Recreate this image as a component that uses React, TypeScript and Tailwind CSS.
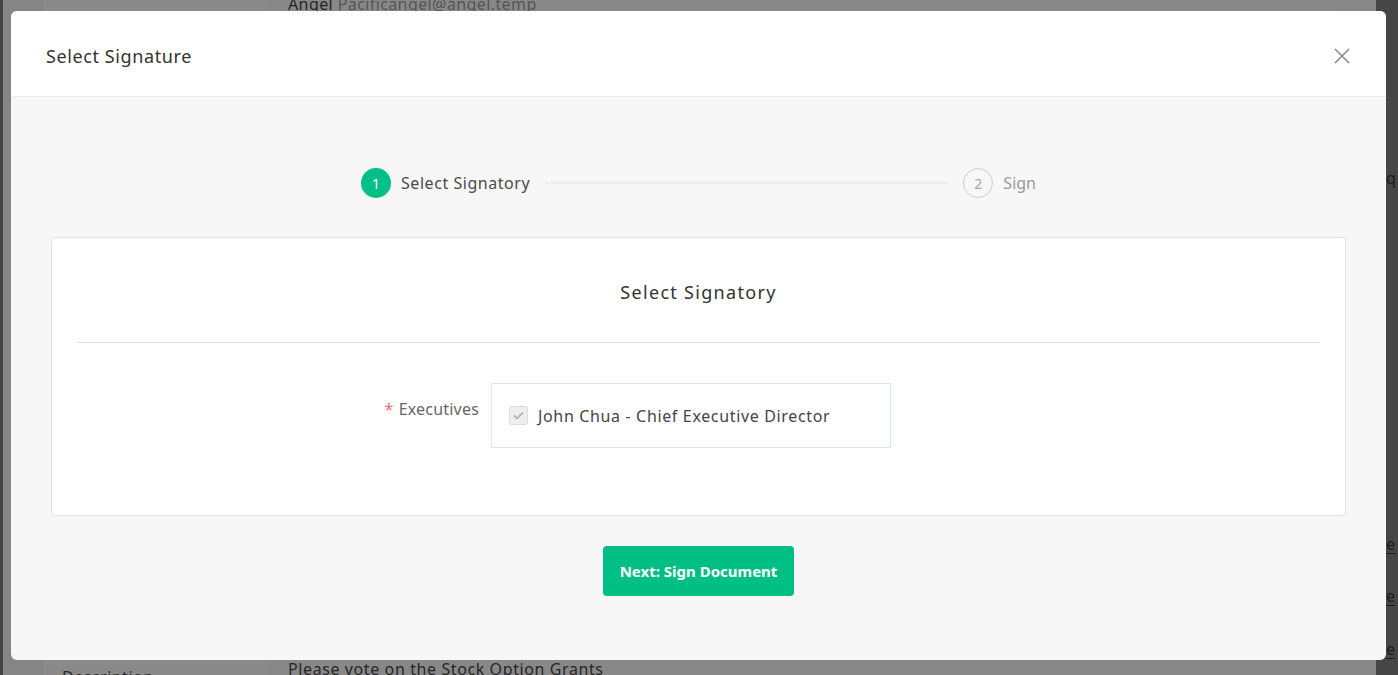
import React from "react";

export default function App() {
  const font = { fontFamily: '"Noto Sans", "Open Sans", sans-serif' };
  return (
    <div className="relative h-[675px] w-[1398px] overflow-hidden bg-[#888888]" style={font}>
      {/* dimmed page behind the modal */}
      <div className="flex h-full w-full">
        <div className="w-[3px] bg-[#444444]" />
        <div className="w-[40px] bg-[#858585]" />
        <div className="flex w-[222px] flex-col justify-end bg-[#8a8a8a] pl-[19px]">
          <div className="mb-[-12px] text-[16px] leading-[20px] tracking-[0.5px] text-[#2a2a2a]">Description</div>
        </div>
        <div className="flex flex-1 flex-col justify-between bg-[#888888] pl-[23px]">
          <div className="mt-[-6px] text-[16px] leading-[20px] tracking-[0.4px]">
            <span className="text-[#262626]">Angel </span>
            <span className="text-[#555555]">Pacificangel@angel.temp</span>
          </div>
          <div className="mb-[-4px] text-[16px] leading-[20px] tracking-[0.6px] text-[#262626]">
            Please vote on the Stock Option Grants
          </div>
        </div>
        <div className="w-[40px] bg-[#878787]" />
        <div className="relative w-[22px] bg-[#464646]">
          <div className="absolute left-[10px] top-[166px] text-[16px] text-[#1c1c1c]">q</div>
          <div className="absolute left-[10px] top-[535px] border-b border-[#1c1c1c] text-[16px] leading-[18px] text-[#1c1c1c]">e</div>
          <div className="absolute left-[10px] top-[587px] border-b border-[#1c1c1c] text-[16px] leading-[18px] text-[#1c1c1c]">e</div>
          <div className="absolute left-[10px] top-[640px] border-b border-[#1c1c1c] text-[16px] leading-[18px] text-[#1c1c1c]">e</div>
        </div>
      </div>

      {/* modal */}
      <div className="absolute left-[11px] top-[11px] flex h-[649px] w-[1375px] flex-col overflow-hidden rounded-[6px] bg-[#f7f7f7]">
        <div className="flex h-[86px] shrink-0 items-center justify-between border-b border-[#ebebeb] bg-white pl-[35px] pr-[36px]">
          <div className="pt-[5px] text-[18px] tracking-[0.6px] text-[#333333]">Select Signature</div>
          <svg width="16" height="16" viewBox="0 0 16 16" className="mt-[4px]">
            <path d="M1 1 L15 15 M15 1 L1 15" stroke="#8c8c8c" strokeWidth="1.6" fill="none" />
          </svg>
        </div>

        <div className="flex flex-1 flex-col items-center pt-[71px]">
          {/* stepper */}
          <div className="flex w-[675px] items-center">
            <div className="flex h-[30px] w-[30px] items-center justify-center rounded-full bg-[#00bf87] text-[14px] text-white">1</div>
            <div className="ml-[10px] text-[16px] tracking-[0.55px] text-[#4a4a4a]">Select Signatory</div>
            <div className="mx-[15px] h-[2px] flex-1 bg-[#ececec]" />
            <div className="flex h-[30px] w-[30px] items-center justify-center rounded-full border border-[#cccccc] text-[14px] text-[#aaaaaa]">2</div>
            <div className="ml-[10px] text-[16px] text-[#9a9a9a]">Sign</div>
          </div>

          {/* card */}
          <div className="mt-[39px] flex h-[279px] w-[1295px] flex-col rounded-[4px] border border-[#e1e1e1] bg-white px-[25px]">
            <div className="flex h-[105px] items-center justify-center border-b border-[#e0e0e0] pt-[5px] text-[18px] tracking-[1.3px] text-[#333333]">
              Select Signatory
            </div>
            <div className="mt-[40px] flex items-start">
              <div className="w-[402px] pt-[14px] text-right text-[16px] tracking-[0.2px] text-[#666666]">
                <span className="mr-[5px] text-[#f56c6c]">*</span>Executives
              </div>
              <div className="ml-[12px] flex h-[65px] w-[400px] items-center border border-[#d3e9f7] pl-[17px]">
                <div className="flex h-[19px] w-[19px] items-center justify-center rounded-[3px] border border-[#dcdcdc] bg-[#eeeeee]">
                  <svg width="11" height="9" viewBox="0 0 11 9">
                    <path d="M1 4.5 L4 7.5 L10 1.5" stroke="#b5b5b5" strokeWidth="1.8" fill="none" />
                  </svg>
                </div>
                <div className="ml-[10px] text-[16px] tracking-[0.65px] text-[#444444]">John Chua - Chief Executive Director</div>
              </div>
            </div>
          </div>

          {/* button */}
          <button className="mt-[30px] flex h-[50px] w-[191px] items-center justify-center rounded-[4px] bg-[#00bf84] text-[15px] font-bold text-white">
            Next: Sign Document
          </button>
        </div>
      </div>
    </div>
  );
}
